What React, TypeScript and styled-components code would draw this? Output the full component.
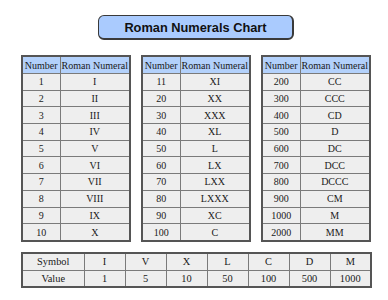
import React from 'react';
import styled, { createGlobalStyle } from 'styled-components';

const GlobalStyle = createGlobalStyle`
  html, body {
    margin: 0;
    padding: 0;
    background: #ffffff;
  }
`;

const groups: [number, string][][] = [
  [
    [1, 'I'], [2, 'II'], [3, 'III'], [4, 'IV'], [5, 'V'],
    [6, 'VI'], [7, 'VII'], [8, 'VIII'], [9, 'IX'], [10, 'X'],
  ],
  [
    [11, 'XI'], [20, 'XX'], [30, 'XXX'], [40, 'XL'], [50, 'L'],
    [60, 'LX'], [70, 'LXX'], [80, 'LXXX'], [90, 'XC'], [100, 'C'],
  ],
  [
    [200, 'CC'], [300, 'CCC'], [400, 'CD'], [500, 'D'], [600, 'DC'],
    [700, 'DCC'], [800, 'DCCC'], [900, 'CM'], [1000, 'M'], [2000, 'MM'],
  ],
];

const symbols: [string, number][] = [
  ['I', 1], ['V', 5], ['X', 10], ['L', 50], ['C', 100], ['D', 500], ['M', 1000],
];

const App = () => {
  return (
    <StPage>
      <GlobalStyle />
      <StTitle>Roman Numerals Chart</StTitle>
      <StTables>
        {groups.map((rows, i) => (
          <StTable key={i}>
            <colgroup>
              <col style={{ width: 38 }} />
              <col />
            </colgroup>
            <thead>
              <tr>
                <StHead>Number</StHead>
                <StHead>Roman Numeral</StHead>
              </tr>
            </thead>
            <tbody>
              {rows.map(([n, r]) => (
                <tr key={n}>
                  <StCell>{n}</StCell>
                  <StCell>{r}</StCell>
                </tr>
              ))}
            </tbody>
          </StTable>
        ))}
      </StTables>
      <StSymbolTable>
        <colgroup>
          <col style={{ width: 62 }} />
        </colgroup>
        <tbody>
          <tr>
            <StCell>Symbol</StCell>
            {symbols.map(([s]) => (
              <StCell key={s}>{s}</StCell>
            ))}
          </tr>
          <tr>
            <StCell>Value</StCell>
            {symbols.map(([s, v]) => (
              <StCell key={s}>{v}</StCell>
            ))}
          </tr>
        </tbody>
      </StSymbolTable>
    </StPage>
  );
};

export default App;

const StPage = styled.div`
  width: 350px;
  padding: 15px 0 0 21px;
  display: flex;
  flex-direction: column;
  align-items: center;
`;

const StTitle = styled.div`
  width: 196px;
  height: 25px;
  box-sizing: border-box;
  display: flex;
  align-items: center;
  justify-content: center;
  background: #aacbfe;
  border: 1px solid #3a3a3a;
  border-bottom-width: 2px;
  border-right-width: 2px;
  border-radius: 6px;
  font-family: 'Liberation Sans', Arial, sans-serif;
  font-weight: bold;
  font-size: 12.8px;
  color: #111;
`;

const StTables = styled.div`
  display: flex;
  gap: 10px;
  margin-top: 15px;
  align-self: stretch;
`;

const StTable = styled.table`
  border-collapse: collapse;
  table-layout: fixed;
  width: 110px;
  font-family: 'Liberation Serif', 'Times New Roman', serif;
  font-size: 10px;
  color: #1a1a1a;
  border: 2px solid #555;
`;

const StHead = styled.th`
  height: 16px;
  padding: 0;
  font-weight: normal;
  text-align: center;
  white-space: nowrap;
  overflow: hidden;
  background: #b3d1fb;
  border: 1px solid #7a7a7a;
`;

const StCell = styled.td`
  height: 15.7px;
  padding: 0;
  text-align: center;
  white-space: nowrap;
  background: #eeeeee;
  border: 1px solid #7a7a7a;
`;

const StSymbolTable = styled(StTable)`
  width: 351px;
  margin-top: 10px;
  align-self: flex-start;
  font-size: 10.4px;
`;
